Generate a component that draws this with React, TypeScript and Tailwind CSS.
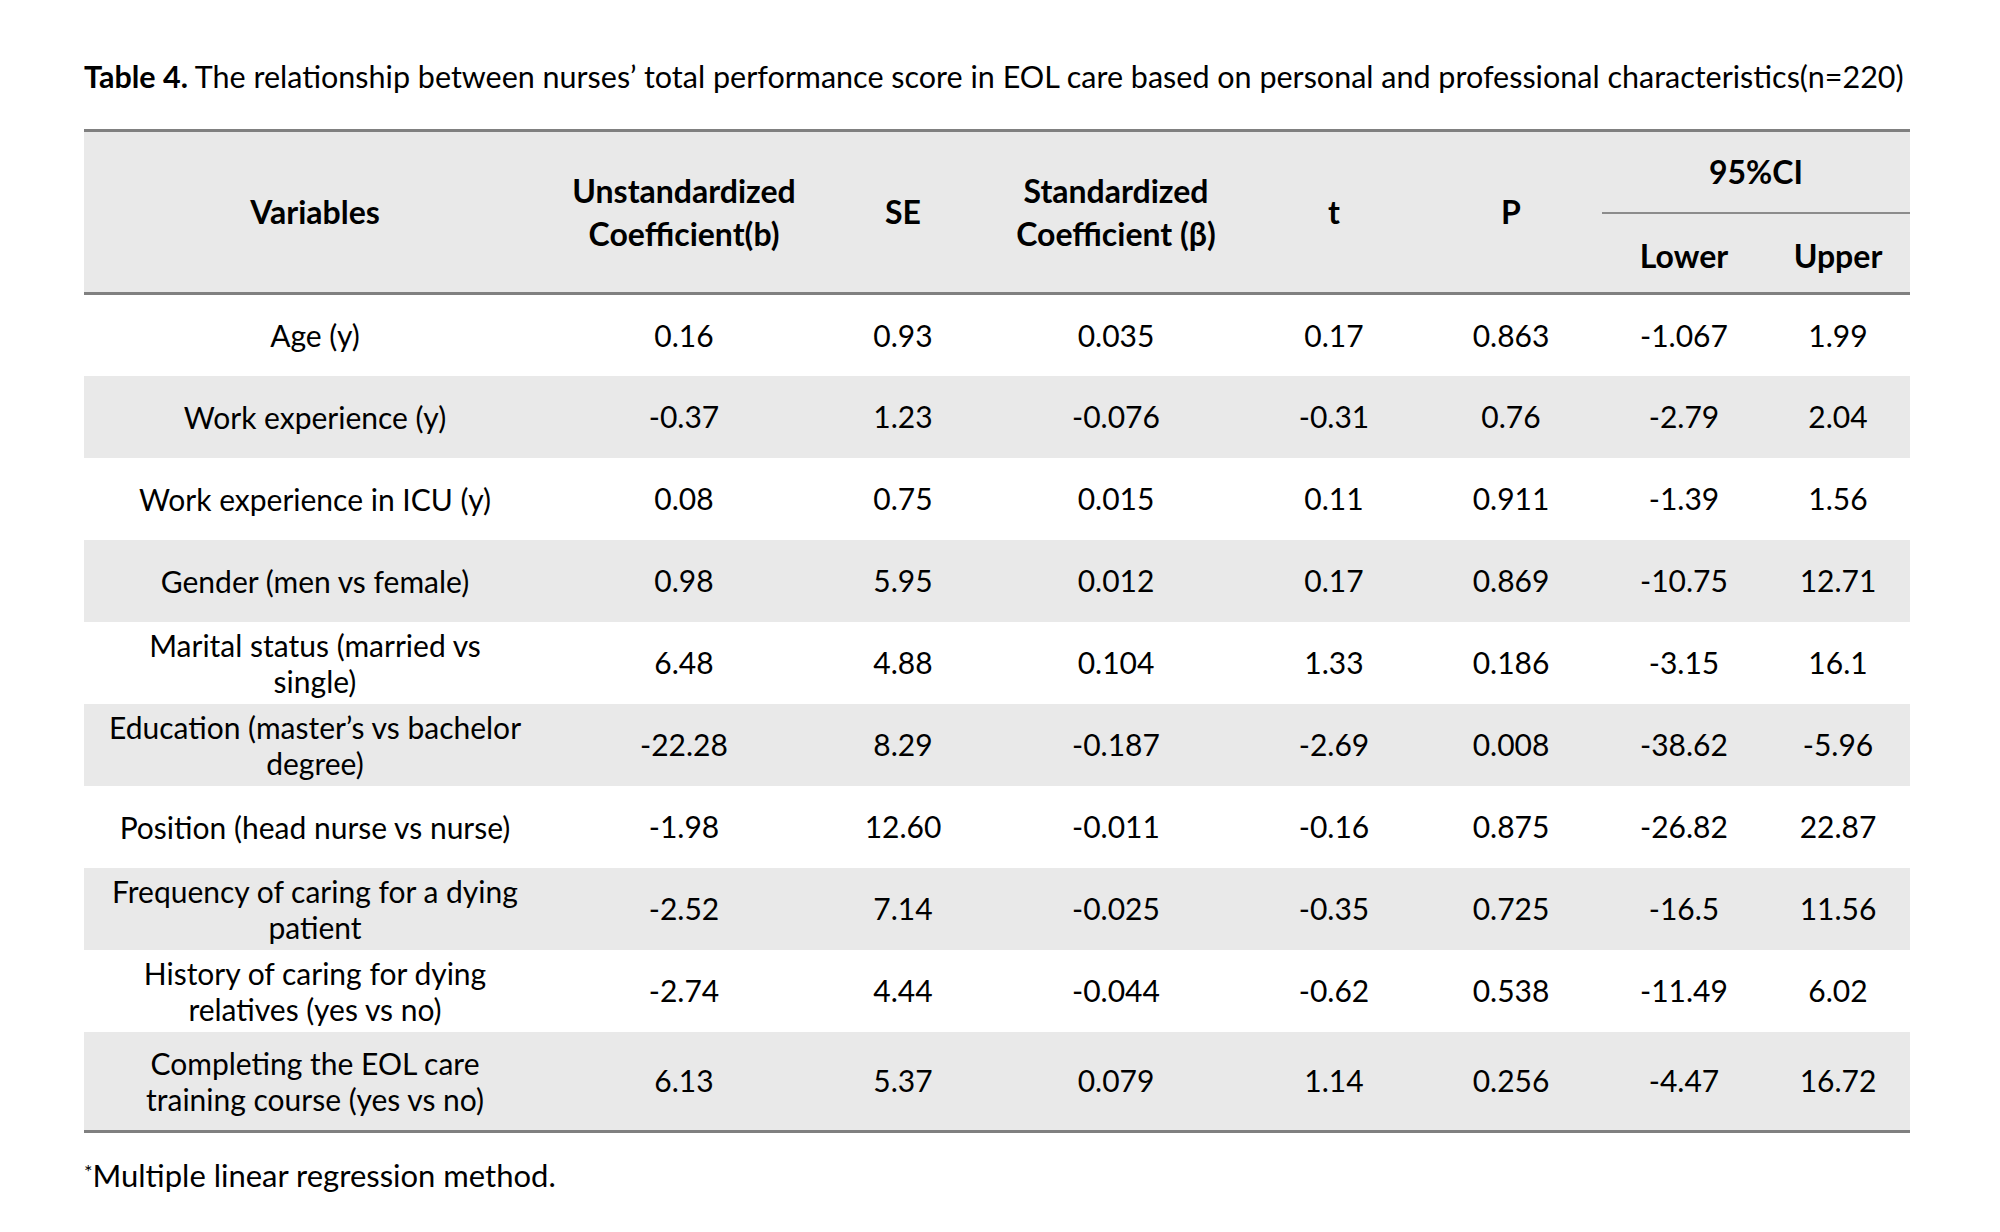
const rows: { v: string[]; cells: string[]; tall?: boolean }[] = [
  { v: ["Age (y)"], cells: ["0.16", "0.93", "0.035", "0.17", "0.863", "-1.067", "1.99"] },
  { v: ["Work experience (y)"], cells: ["-0.37", "1.23", "-0.076", "-0.31", "0.76", "-2.79", "2.04"] },
  { v: ["Work experience in ICU (y)"], cells: ["0.08", "0.75", "0.015", "0.11", "0.911", "-1.39", "1.56"] },
  { v: ["Gender (men vs female)"], cells: ["0.98", "5.95", "0.012", "0.17", "0.869", "-10.75", "12.71"] },
  { v: ["Marital status (married vs", "single)"], cells: ["6.48", "4.88", "0.104", "1.33", "0.186", "-3.15", "16.1"] },
  { v: ["Education (master’s vs bachelor", "degree)"], cells: ["-22.28", "8.29", "-0.187", "-2.69", "0.008", "-38.62", "-5.96"] },
  { v: ["Position (head nurse vs nurse)"], cells: ["-1.98", "12.60", "-0.011", "-0.16", "0.875", "-26.82", "22.87"] },
  { v: ["Frequency of caring for a dying", "patient"], cells: ["-2.52", "7.14", "-0.025", "-0.35", "0.725", "-16.5", "11.56"] },
  { v: ["History of caring for dying", "relatives (yes vs no)"], cells: ["-2.74", "4.44", "-0.044", "-0.62", "0.538", "-11.49", "6.02"] },
  { v: ["Completing the EOL care", "training course (yes vs no)"], cells: ["6.13", "5.37", "0.079", "1.14", "0.256", "-4.47", "16.72"], tall: true },
];

const widths = ["w-[462px]", "w-[276px]", "w-[162px]", "w-[264px]", "w-[172px]", "w-[182px]", "w-[164px]", "w-[144px]"];

export default function App() {
  return (
    <div className="w-[2000px] h-[1232px] bg-white text-black font-['Lato','Open_Sans',sans-serif]">
      <div className="pl-[84px] pt-[57px]">
        <p className="text-[30.5px] leading-[38px] whitespace-nowrap">
          <span className="font-bold">Table 4.</span> The relationship between nurses’ total performance score in EOL care based on personal and professional characteristics(n=220)
        </p>
        <table className="mt-[34px] w-[1826px] table-fixed border-collapse text-[30px] text-center">
          <colgroup>
            {widths.map((w, i) => (
              <col key={i} className={w} />
            ))}
          </colgroup>
          <thead className="bg-[#e9e9e9] text-[32px]">
            <tr className="h-[82px] border-t-[3px] border-[#808080]">
              <th rowSpan={2} className="font-bold">Variables</th>
              <th rowSpan={2} className="font-bold leading-[43px]">
                Unstandardized
                <br />
                Coefficient(b)
              </th>
              <th rowSpan={2} className="font-bold">SE</th>
              <th rowSpan={2} className="font-bold leading-[43px]">
                Standardized
                <br />
                Coefficient (β)
              </th>
              <th rowSpan={2} className="font-bold">t</th>
              <th rowSpan={2} className="font-bold">P</th>
              <th colSpan={2} className="font-bold border-b-2 border-[#8c8c8c]">95%CI</th>
            </tr>
            <tr className="h-[81px] border-b-[3px] border-[#808080]">
              <th className="font-bold pt-[6px]">Lower</th>
              <th className="font-bold pt-[6px]">Upper</th>
            </tr>
          </thead>
          <tbody>
            {rows.map((r, i) => (
              <tr
                key={r.v[0]}
                className={`${r.tall ? "h-[100px] border-b-[3px] border-[#808080]" : "h-[82px]"} ${i % 2 === 1 ? "bg-[#e9e9e9]" : "bg-white"}`}
              >
                <td className="leading-[36px] whitespace-nowrap">
                  {r.v.map((line, k) => (
                    <div key={k}>{line}</div>
                  ))}
                </td>
                {r.cells.map((c, j) => (
                  <td key={j}>{c}</td>
                ))}
              </tr>
            ))}
          </tbody>
        </table>
        <p className="mt-[23px] text-[31px] leading-[38px]">
          <span className="text-[20px] align-top relative top-[-4px]">*</span>Multiple linear regression method.
        </p>
      </div>
    </div>
  );
}
